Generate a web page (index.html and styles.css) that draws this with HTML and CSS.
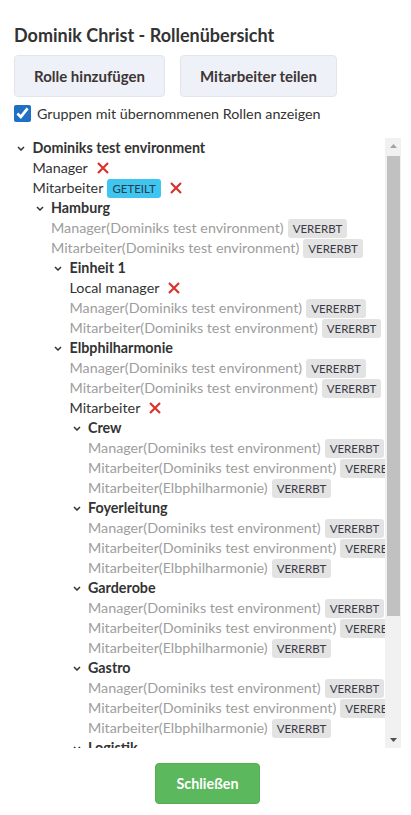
FILE: index.html
```html
<!DOCTYPE html>
<html lang="de">
<head>
  <meta charset="UTF-8">
  <title>Rollenübersicht</title>
  <link rel="stylesheet" href="styles.css">
</head>
<body>

  <div class="dialog">
    <h1 class="dialog-title">Dominik Christ - Rollenübersicht</h1>

    <div class="actions">
      <button class="btn">Rolle hinzufügen</button>
      <button class="btn">Mitarbeiter teilen</button>
    </div>

    <div class="show-inherited">
      <input type="checkbox" id="inheritedCheckbox" checked>
      <label for="inheritedCheckbox">Gruppen mit übernommenen Rollen anzeigen</label>
    </div>

    <div class="tree-frame">
      <div class="tree" id="tree"></div>
      <div class="scrollbar">
        <div class="scroll-btn">
          <svg width="7" height="4" viewBox="0 0 7 4"><polygon points="0,4 3.5,0 7,4" fill="#a3a3a3"/></svg>
        </div>
        <div class="scroll-track" id="track">
          <div class="scroll-thumb" id="thumb"></div>
        </div>
        <div class="scroll-btn">
          <svg width="7" height="4" viewBox="0 0 7 4"><polygon points="0,0 3.5,4 7,0" fill="#505050"/></svg>
        </div>
      </div>
    </div>

    <div class="footer">
      <button class="btn-close">Schließen</button>
    </div>
  </div>

  <script>
    const ROOT = 'Dominiks test environment';

    function inherited(...from) {
      return from.map(f => ({ name: f, inherited: true }));
    }

    const tree = {
      name: ROOT,
      roles: [
        { name: 'Manager', own: true },
        { name: 'Mitarbeiter', own: true, shared: true }
      ],
      children: [
        {
          name: 'Hamburg',
          roles: inherited('Manager(' + ROOT + ')', 'Mitarbeiter(' + ROOT + ')'),
          children: [
            {
              name: 'Einheit 1',
              roles: [{ name: 'Local manager', own: true }]
                .concat(inherited('Manager(' + ROOT + ')', 'Mitarbeiter(' + ROOT + ')')),
              children: []
            },
            {
              name: 'Elbphilharmonie',
              roles: inherited('Manager(' + ROOT + ')', 'Mitarbeiter(' + ROOT + ')')
                .concat([{ name: 'Mitarbeiter', own: true }]),
              children: ['Crew', 'Foyerleitung', 'Garderobe', 'Gastro', 'Logistik', 'Technik'].map(name => ({
                name: name,
                roles: inherited(
                  'Manager(' + ROOT + ')',
                  'Mitarbeiter(' + ROOT + ')',
                  'Mitarbeiter(Elbphilharmonie)'
                ),
                children: []
              }))
            }
          ]
        }
      ]
    };

    const svgNS = 'http://www.w3.org/2000/svg';

    function makeIcon(cls, w, h, draw) {
      const svg = document.createElementNS(svgNS, 'svg');
      svg.setAttribute('class', cls);
      svg.setAttribute('width', w);
      svg.setAttribute('height', h);
      svg.setAttribute('viewBox', '0 0 ' + w + ' ' + h);
      draw.forEach(d => {
        const p = document.createElementNS(svgNS, 'path');
        p.setAttribute('d', d);
        svg.appendChild(p);
      });
      return svg;
    }

    function roleRow(role) {
      const row = document.createElement('div');
      row.className = 'role' + (role.inherited ? ' role-inherited' : '');

      const label = document.createElement('span');
      label.textContent = role.name;
      row.appendChild(label);

      if (role.shared) {
        const badge = document.createElement('span');
        badge.className = 'badge badge-shared';
        badge.textContent = 'Geteilt';
        row.appendChild(badge);
      }
      if (role.inherited) {
        const badge = document.createElement('span');
        badge.className = 'badge';
        badge.textContent = 'Vererbt';
        row.appendChild(badge);
      }
      if (role.own) {
        row.appendChild(makeIcon('remove', 14, 14, ['M2 2 L12 12 M12 2 L2 12']));
      }
      return row;
    }

    function renderGroup(group) {
      const wrap = document.createElement('div');
      wrap.className = 'group';

      const head = document.createElement('div');
      head.className = 'group-name';
      const toggle = document.createElement('span');
      toggle.className = 'toggle';
      toggle.appendChild(makeIcon('chevron', 8, 5, ['M1 1 L4 4 L7 1']));
      head.appendChild(toggle);
      head.appendChild(document.createTextNode(group.name));
      wrap.appendChild(head);

      const body = document.createElement('div');
      body.className = 'group-body';
      group.roles.forEach(r => body.appendChild(roleRow(r)));
      group.children.forEach(c => body.appendChild(renderGroup(c)));
      wrap.appendChild(body);

      return wrap;
    }

    const treeDiv = document.getElementById('tree');
    treeDiv.appendChild(renderGroup(tree));

    // size the thumb like a real scrollbar would
    const track = document.getElementById('track');
    const thumbHeight = track.clientHeight * treeDiv.clientHeight / treeDiv.scrollHeight - 4;
    document.getElementById('thumb').style.height = thumbHeight + 'px';
  </script>
</body>
</html>
```

FILE: styles.css
```css
body {
  margin: 0;
  font-family: Lato, "Liberation Sans", sans-serif;
  color: #333;
  background: white;
}

.dialog {
  padding: 24px 10px 0 14px;
}

.dialog-title {
  margin: 0;
  font-size: 18px;
  line-height: 22px;
  font-weight: bold;
}

.actions {
  display: flex;
  gap: 15px;
  margin-top: 9px;
}

.btn {
  height: 42px;
  padding: 0 19px;
  font-family: inherit;
  font-size: 15px;
  font-weight: bold;
  color: #3d3535;
  background-color: #eef1f8;
  border: 1px solid #e1e5ee;
  border-radius: 4px;
  cursor: pointer;
}

.show-inherited {
  display: flex;
  align-items: center;
  gap: 6px;
  margin-top: 8px;
  height: 17px;
  font-size: 14.3px;
}

.show-inherited input {
  width: 17px;
  height: 17px;
  margin: 0;
  accent-color: #1f6fc5;
}

.tree-frame {
  display: flex;
  margin-top: 16px;
  height: 610px;
}

.tree {
  flex: 1;
  min-width: 0;
  overflow: hidden;
  font-size: 14.3px;
  line-height: 20px;
  white-space: nowrap;
}

.scrollbar {
  width: 16px;
  flex-shrink: 0;
  display: flex;
  flex-direction: column;
  background-color: #f1f1f1;
}

.scroll-btn {
  height: 16px;
  display: flex;
  align-items: center;
  justify-content: center;
}

.scroll-track {
  flex: 1;
}

.scroll-thumb {
  margin: 2px 1.5px 0 2px;
  background-color: #c1c1c1;
}

.group-name {
  font-weight: bold;
  display: flex;
  align-items: center;
  height: 20px;
}

.toggle {
  width: 18.5px;
  flex-shrink: 0;
  display: flex;
  align-items: center;
  padding-left: 3px;
  box-sizing: border-box;
}

.chevron path {
  fill: none;
  stroke: #333;
  stroke-width: 1.5;
}

.group-body {
  padding-left: 18.5px;
}

.role {
  height: 20px;
  display: flex;
  align-items: center;
}

.role-inherited {
  color: #9d9d9d;
}

.badge {
  display: inline-block;
  margin-left: 4px;
  padding: 0 5px;
  height: 19px;
  line-height: 19px;
  border-radius: 3px;
  font-size: 11.5px;
  text-transform: uppercase;
  color: #3a3a45;
  background-color: #e3e3e3;
}

.badge-shared {
  background-color: #3ec6f1;
  color: #2b3a4a;
}

.remove {
  margin-left: 8px;
  flex-shrink: 0;
}

.remove path {
  fill: none;
  stroke: #d9332c;
  stroke-width: 2.2;
}

.footer {
  display: flex;
  justify-content: center;
  margin-top: 15px;
}

.btn-close {
  height: 41px;
  padding: 0 21px;
  font-family: inherit;
  font-size: 14.3px;
  font-weight: bold;
  color: white;
  background-color: #5cb85c;
  border: 1px solid #53ae53;
  border-radius: 4px;
  cursor: pointer;
}
```
